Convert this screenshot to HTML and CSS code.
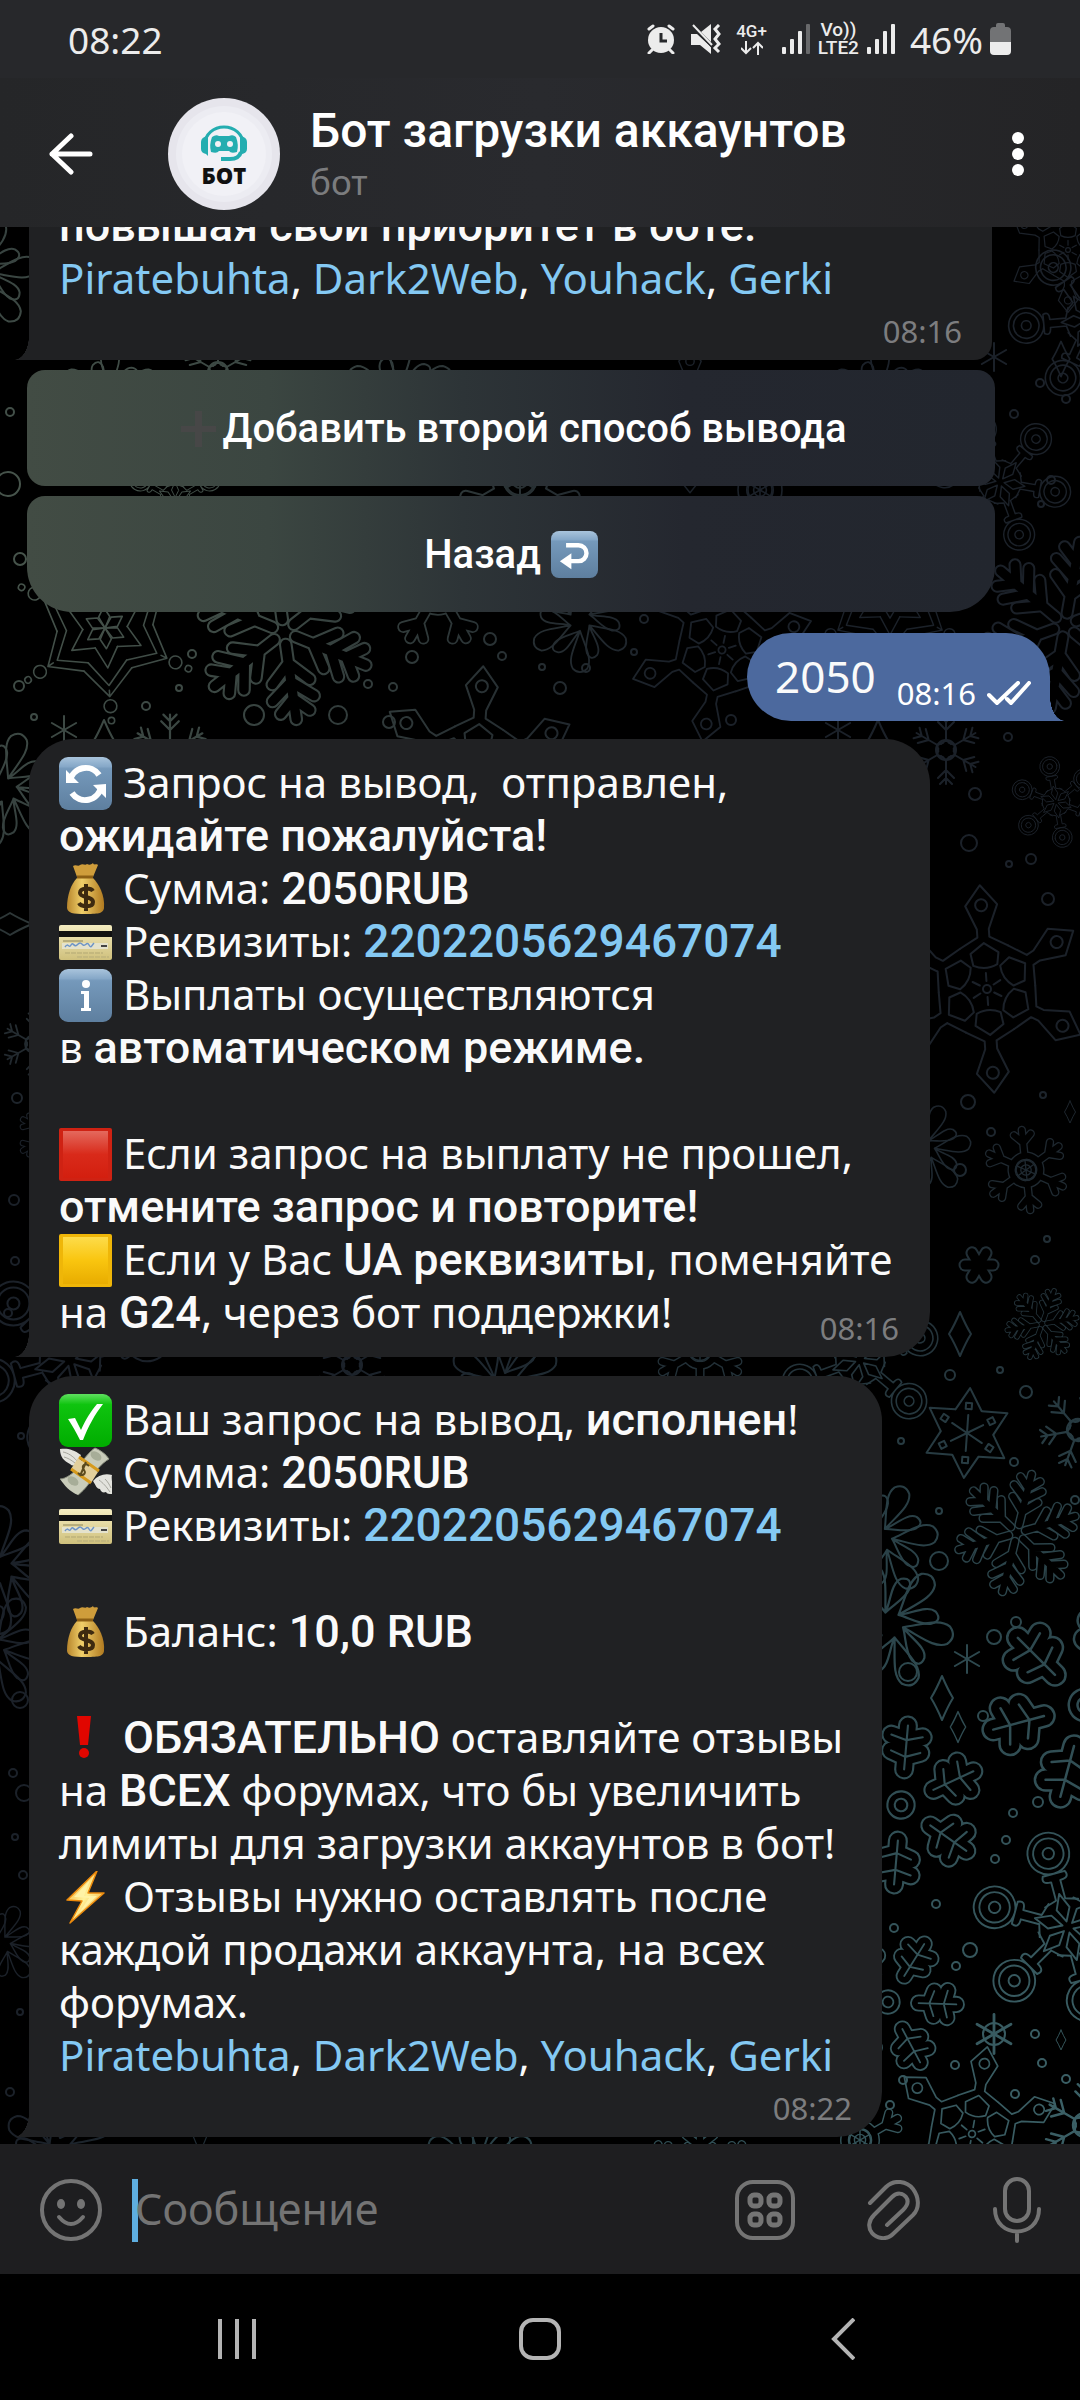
FILE: index.html
```html
<!DOCTYPE html>
<html lang="ru">
<head>
  <meta charset="UTF-8">
  <meta name="viewport" content="width=device-width, initial-scale=1.0">
  <title>Бот загрузки аккаунтов</title>
  <link rel="stylesheet" href="styles.css">
</head>
<body>
  <!-- emoji -->
  <svg class="defs" aria-hidden="true">
    <defs>
      <linearGradient id="blue" x1="0" y1="0" x2="0" y2="1">
        <stop offset="0" stop-color="#a9c4dc"/><stop offset=".18" stop-color="#86a8c8"/>
        <stop offset=".22" stop-color="#7599bb"/><stop offset="1" stop-color="#5e7f9f"/>
      </linearGradient>
      <linearGradient id="red" x1="0" y1="0" x2="0" y2="1">
        <stop offset="0" stop-color="#e4695d"/><stop offset=".5" stop-color="#d92a1a"/><stop offset="1" stop-color="#d31f0f"/>
      </linearGradient>
      <linearGradient id="yellow" x1="0" y1="0" x2="0" y2="1">
        <stop offset="0" stop-color="#fddc4a"/><stop offset=".5" stop-color="#f9c50f"/><stop offset="1" stop-color="#e8ac00"/>
      </linearGradient>
      <linearGradient id="green" x1="0" y1="0" x2="0" y2="1">
        <stop offset="0" stop-color="#5fe05f"/><stop offset=".2" stop-color="#0fc40f"/><stop offset="1" stop-color="#00ad00"/>
      </linearGradient>
      <linearGradient id="gold" x1="0" y1="0" x2="1" y2="0">
        <stop offset="0" stop-color="#b8862c"/><stop offset=".4" stop-color="#f0cf6a"/><stop offset="1" stop-color="#b07a20"/>
      </linearGradient>
      <linearGradient id="cream" x1="0" y1="0" x2="0" y2="1">
        <stop offset="0" stop-color="#f4ecc0"/><stop offset="1" stop-color="#cfc07c"/>
      </linearGradient>
      <linearGradient id="bolt" x1="0" y1="0" x2="1" y2="1">
        <stop offset="0" stop-color="#f59a12"/><stop offset=".5" stop-color="#fff29a"/><stop offset="1" stop-color="#f08c0a"/>
      </linearGradient>
    </defs>
    <symbol id="e-refresh" viewBox="0 0 53 53">
      <rect width="53" height="53" rx="9" fill="url(#blue)"/>
      <path d="M11 24A16 16 0 0 1 40 18M42 30A16 16 0 0 1 13 36" fill="none" stroke="#fff" stroke-width="6"/>
      <path d="M7 26V13l13 13zM47 27v14L34 28z" fill="#fff"/>
    </symbol>
    <symbol id="e-bag" viewBox="0 0 53 53">
      <path d="M18 14L14 3c3-2 5 1 7-1 3-2 5 1 7-1 2 1 4 1 6-1 1 3 4 0 5 2l-5 12z" fill="#cf9d3b"/>
      <path d="M18 15h16c6 6 12 17 11 30-1 5-4 6-18 6S9 50 8 45C8 32 12 21 18 15z" fill="url(#gold)"/>
      <path d="M18 14h16" stroke="#8c5f14" stroke-width="3"/>
      <path d="M34 28c-2-3-13-4-13 2 0 5 13 3 13 9 0 6-12 5-14 1M27 21v27" fill="none" stroke="#3d2a10" stroke-width="4"/>
    </symbol>
    <symbol id="e-card" viewBox="0 0 53 53">
      <rect y="9" width="53" height="35" rx="2" fill="url(#cream)"/>
      <rect y="15" width="53" height="6" fill="#111"/>
      <path d="M4 25h20" stroke="#8b8458" stroke-width="1"/>
      <rect x="3" y="27" width="46" height="6" fill="#e4e2cc"/>
      <path d="M6 31c3-5 4 2 6-2s3 3 6 0 4-2 6 0 4-4 6 0 3 0 5-2" fill="none" stroke="#6d94c6" stroke-width="1.5"/>
      <path d="M42 30h6" stroke="#444" stroke-width="2"/>
      <path d="M6 37h38M18 41h32" stroke="#c4b87e" stroke-width="2" stroke-dasharray="5 1"/>
    </symbol>
    <symbol id="e-info" viewBox="0 0 53 53">
      <rect width="53" height="53" rx="9" fill="url(#blue)"/>
      <circle cx="27" cy="15" r="4" fill="#fff"/>
      <path d="M22 22h8v17h2v3H22v-3h3V25h-3z" fill="#fff"/>
    </symbol>
    <symbol id="e-red" viewBox="0 0 53 53">
      <rect width="53" height="53" rx="2" fill="#cf2213"/>
      <rect x="4" y="3" width="45" height="47" fill="url(#red)"/>
    </symbol>
    <symbol id="e-yellow" viewBox="0 0 53 53">
      <rect width="53" height="53" rx="2" fill="#efb608"/>
      <rect x="4" y="3" width="45" height="47" fill="url(#yellow)"/>
    </symbol>
    <symbol id="e-check" viewBox="0 0 53 53">
      <rect width="53" height="53" rx="9" fill="url(#green)"/>
      <path d="M9 25l7-1 6 12C27 25 32 17 38 10h6C36 20 29 33 24 46h-3C17 38 13 31 9 25z" fill="#fff"/>
    </symbol>
    <symbol id="e-money" viewBox="0 0 53 53">
      <path d="M22 8C14 2 8 1 1 2c0 8 4 12 10 15 2 2 4 2 7 0zM34 34c5-6 12-8 19-6-1 4 1 7 0 19-3 0-5 0-6-2-3 1-5 0-6-3-3 0-4-3-7-8z" fill="#e3e3dd"/>
      <path d="M4 5c5 1 10 4 14 9M5 10c4 1 7 3 11 6M40 33c4 3 7 6 11 12M46 32c3 3 4 5 6 9" fill="none" stroke="#a5a59c" stroke-width="1"/>
      <path d="M1 32c6 0 14-6 18-12S32 3 36 1c5 2 11 6 14 11-7 4-14 12-17 19S23 45 19 48C11 45 5 38 1 32z" fill="#c9ccba"/>
      <path d="M1 32c6 0 14-6 18-12S32 3 36 1c5 2 11 6 14 11-7 4-14 12-17 19S23 45 19 48" fill="none" stroke="#8c9180" stroke-width="1"/>
      <ellipse cx="37" cy="9" rx="6" ry="4" fill="#a7ad98" transform="rotate(35 37 9)"/>
      <ellipse cx="14" cy="34" rx="6" ry="4" fill="#a7ad98" transform="rotate(35 14 34)"/>
      <path d="M19 11l20 14-7 11-20-14z" fill="#e2cf9c"/>
      <path d="M20 10l20 14M12 22l20 14" stroke="#d69a1d" stroke-width="3"/>
      <path d="M30 19c-4-4-8 0-5 4s-2 7-6 3M27 15L21 29" fill="none" stroke="#5b4a1e" stroke-width="2"/>
    </symbol>
    <symbol id="e-bang" viewBox="0 0 53 53">
      <path d="M18 4h14l-3 29h-8z" fill="#e10600"/><circle cx="25" cy="41" r="5" fill="#e10600"/>
    </symbol>
    <symbol id="e-bolt" viewBox="0 0 53 53">
      <path d="M38 0L8 29l15 1-12 22 34-30H29z" fill="url(#bolt)" stroke="#ec8a0c" stroke-width="1.5" stroke-linejoin="round"/>
      <path d="M31 9L15 26l15 1-10 15 18-17H25z" fill="#fff3a6"/>
    </symbol>
    <symbol id="e-plus" viewBox="0 0 47 47">
      <path d="M20 6h7v15h14v6H27v15h-7V27H6v-6h14z" fill="#474747"/>
    </symbol>
    <symbol id="e-back" viewBox="0 0 53 53">
      <rect width="53" height="53" rx="9" fill="url(#blue)"/>
      <path d="M17 16h14a9 9 0 0 1 0 18h-9" fill="none" stroke="#fff" stroke-width="5"/>
      <path d="M10 34l13-9v18z" fill="#fff"/>
    </symbol>
  </svg>

  <div class="statusbar">
    <span class="clock">08:22</span>
    <div class="status-icons">
      <svg width="30" height="30" viewBox="0 0 30 30" fill="none" stroke="#ececec" stroke-width="3" stroke-linecap="round">
        <circle cx="15" cy="16" r="13" fill="#ececec" stroke="none"/>
        <path d="M3 5l4-3M27 5l-4-3M6 26l-3 3M24 26l3 3"/>
        <path d="M15 9v8h6" stroke="#27282b" stroke-width="3" stroke-linecap="butt"/>
      </svg>
      <svg width="30" height="30" viewBox="0 0 30 30">
        <path d="M0 10h6l14 13v7L9 21H0zM20 0v18L10 8z" fill="#ececec"/>
        <path d="M2 2l20 22" stroke="#27282b" stroke-width="2"/>
        <path d="M2 1l19 20" stroke="#ececec" stroke-width="2"/>
        <path d="M28 1l-4 4 4 5-4 5 4 5-4 4 4 4" fill="none" stroke="#ececec" stroke-width="3"/>
      </svg>
      <div class="net">
        <span>4G+</span>
        <svg width="22" height="14" viewBox="0 0 22 14" fill="none" stroke="#ececec" stroke-width="2"><path d="M5 0v12M0 7l5 5 5-5M17 14V2M12 7l5-5 5 5"/></svg>
      </div>
      <svg width="28" height="30" viewBox="0 0 28 30" fill="#ececec">
        <rect y="23" width="4" height="7" rx="1"/><rect x="8" y="15" width="4" height="15" rx="1"/>
        <rect x="16" y="7" width="4" height="23" rx="1"/><rect x="24" width="4" height="30" rx="1" fill="#68696b"/>
      </svg>
      <div class="net lte"><span>Vo))</span><span>LTE2</span></div>
      <svg width="28" height="30" viewBox="0 0 28 30" fill="#ececec">
        <rect y="23" width="4" height="7" rx="1"/><rect x="8" y="15" width="4" height="15" rx="1"/>
        <rect x="16" y="7" width="4" height="23" rx="1"/><rect x="24" width="4" height="30" rx="1"/>
      </svg>
      <span class="battery-level">46%</span>
      <svg class="battery" width="21" height="32" viewBox="0 0 21 32">
        <path d="M6 4V2q0-2 2-2h5q2 0 2 2v2h2q4 0 4 4v12H0V8q0-4 4-4z" fill="#727375"/>
        <path d="M0 19h21v9q0 4-4 4H4q-4 0-4-4z" fill="#ececec"/>
      </svg>
    </div>
  </div>

  <header class="header">
    <button class="icon-btn back" aria-label="Назад">
      <svg width="44" height="42" viewBox="0 0 44 42" fill="none" stroke="#fff" stroke-width="5" stroke-linecap="round" stroke-linejoin="round"><path d="M22 3L3 21l19 18M3 21h38"/></svg>
    </button>
    <svg class="avatar" width="112" height="112" viewBox="0 0 112 112">
      <circle cx="56" cy="56" r="56" fill="#e6e5ec"/>
      <circle cx="56" cy="56" r="48" fill="#ececf2"/>
      <circle cx="56" cy="56" r="42" fill="#f1f1f6"/>
      <path d="M37 46a19 17 0 0 1 38 0" fill="none" stroke="#24adb0" stroke-width="3"/>
      <path d="M40 38v20l-2-2q-5-1-5-5v-7q0-5 7-6zM72 38v18q7 0 7-5v-7q0-5-7-6z" fill="#24adb0"/>
      <path d="M44 39q4-3 7-1h10q4-2 7 1 3 8 1 15-6 2-8-1H51q-2 3-8 1-2-7 1-15z" fill="#24adb0"/>
      <circle cx="50" cy="46" r="3" fill="#f1f1f6"/><circle cx="62" cy="46" r="3" fill="#f1f1f6"/>
      <path d="M73 54q-2 7-11 7h-9" fill="none" stroke="#24adb0" stroke-width="4"/>
      <text x="56" y="86" text-anchor="middle" class="avatar-text">БОТ</text>
    </svg>
    <div class="peer">
      <h1>Бот загрузки аккаунтов</h1>
      <p>бот</p>
    </div>
    <button class="icon-btn" aria-label="Меню">
      <svg width="12" height="44" viewBox="0 0 12 44" fill="#fff"><circle cx="6" cy="6" r="6"/><circle cx="6" cy="22" r="6"/><circle cx="6" cy="38" r="6"/></svg>
    </button>
  </header>

  <main class="chat">
    <!-- wallpaper: every flake is one arm rotated six times -->
    <svg class="wallpaper" viewBox="0 227 1080 1917" preserveAspectRatio="xMidYMin slice" aria-hidden="true">
      <defs>
        <radialGradient id="w-top" gradientUnits="userSpaceOnUse" cx="60" cy="520" r="620">
          <stop offset="0" stop-color="#4a584e"/><stop offset=".4" stop-color="#3a4642"/><stop offset="1" stop-color="#3a4642" stop-opacity="0"/>
        </radialGradient>
        <radialGradient id="w-bottom" gradientUnits="userSpaceOnUse" cx="1080" cy="2100" r="1050">
          <stop offset="0" stop-color="#3b6066"/><stop offset=".45" stop-color="#2d484e"/><stop offset="1" stop-color="#2d484e" stop-opacity="0"/>
        </radialGradient>

        <path id="a-fern" d="M0 -12V-84M0 -30l18 -18M0 -30l-18 -18M0 -48l20 -16M0 -48l-20 -16M0 -64l14 -13M0 -64l-14 -13"/>
        <path id="a-lobe" d="M0 -22V-62M0 -42l13 -13M0 -42l-13 -13"/>
        <path id="a-oak" d="M0 -34V-76M0 -62l15 -4M0 -62l-15 -4M0 -46l14 -5M0 -46l-14 -5"/>
        <path id="a-drop" d="M0 -12C-6 -30 -14 -44 -8 -54Q0 -62 8 -54C14 -44 6 -30 0 -12zM0 -12C8 -20 14 -36 24 -36Q34 -34 28 -25C22 -18 8 -16 0 -12z"/>
        <path id="a-gem" d="M-6 -52V-60L-16 -84L0 -104L16 -84L6 -60V-52L24 -42M-6 -52L-24 -42M-12 -24L-14 -36L0 -46L14 -36L12 -24Q0 -18 -12 -24zM0 -8v-8M6 -84a6 6 0 1 0 -12 0a6 6 0 1 0 12 0"/>
        <path id="a-ring" d="M-5 -30V-50Q-16 -50 -12 -58L12 -58Q16 -50 5 -50V-30L18 -26M-5 -30L-18 -26M0 -6L-7 -20L0 -36L7 -20zM22 -80a22 22 0 1 0 -44 0a22 22 0 1 0 44 0M16 -80a16 16 0 1 0 -32 0a16 16 0 1 0 32 0M6 -80a6 6 0 1 0 -12 0a6 6 0 1 0 12 0"/>
        <path id="a-thin" d="M0 -10V-34M0 -20l8 -8M0 -20l-8 -8M0 -28l6 -6M0 -28l-6 -6M5 -6l-5 -4l-5 4"/>
        <path id="a-star" d="M-30 -52L0 -86L30 -52M-24 -42L0 -72L24 -42M-14 -24L0 -50L14 -24M0 0L-7 -14L0 -26L7 -14zM0 -86v8M8 -98a8 8 0 1 0 -16 0a8 8 0 1 0 16 0M4 -116a4 4 0 1 0 -8 0a4 4 0 1 0 8 0"/>
        <path id="a-six" d="M-13 -23L0 -45L13 -23M0 0V-18M-3 -30h6v6h-6z"/>
        <path id="a-spark" d="M0 0V-14"/>

        <g id="fern"><use href="#a-fern"/><use href="#a-fern" transform="rotate(60)"/><use href="#a-fern" transform="rotate(120)"/><use href="#a-fern" transform="rotate(180)"/><use href="#a-fern" transform="rotate(240)"/><use href="#a-fern" transform="rotate(300)"/></g>
        <g id="lobe"><use href="#a-lobe"/><use href="#a-lobe" transform="rotate(60)"/><use href="#a-lobe" transform="rotate(120)"/><use href="#a-lobe" transform="rotate(180)"/><use href="#a-lobe" transform="rotate(240)"/><use href="#a-lobe" transform="rotate(300)"/><circle r="22"/></g>
        <g id="oak"><use href="#a-oak"/><use href="#a-oak" transform="rotate(60)"/><use href="#a-oak" transform="rotate(120)"/><use href="#a-oak" transform="rotate(180)"/><use href="#a-oak" transform="rotate(240)"/><use href="#a-oak" transform="rotate(300)"/></g>
        <g id="drop"><use href="#a-drop"/><use href="#a-drop" transform="rotate(60)"/><use href="#a-drop" transform="rotate(120)"/><use href="#a-drop" transform="rotate(180)"/><use href="#a-drop" transform="rotate(240)"/><use href="#a-drop" transform="rotate(300)"/></g>
        <g id="gem"><use href="#a-gem"/><use href="#a-gem" transform="rotate(60)"/><use href="#a-gem" transform="rotate(120)"/><use href="#a-gem" transform="rotate(180)"/><use href="#a-gem" transform="rotate(240)"/><use href="#a-gem" transform="rotate(300)"/><circle r="4"/></g>
        <g id="ring"><use href="#a-ring"/><use href="#a-ring" transform="rotate(60)"/><use href="#a-ring" transform="rotate(120)"/><use href="#a-ring" transform="rotate(180)"/><use href="#a-ring" transform="rotate(240)"/><use href="#a-ring" transform="rotate(300)"/></g>
        <g id="thin"><use href="#a-thin"/><use href="#a-thin" transform="rotate(60)"/><use href="#a-thin" transform="rotate(120)"/><use href="#a-thin" transform="rotate(180)"/><use href="#a-thin" transform="rotate(240)"/><use href="#a-thin" transform="rotate(300)"/><circle r="10"/></g>
        <g id="star"><use href="#a-star"/><use href="#a-star" transform="rotate(60)"/><use href="#a-star" transform="rotate(120)"/><use href="#a-star" transform="rotate(180)"/><use href="#a-star" transform="rotate(240)"/><use href="#a-star" transform="rotate(300)"/></g>
        <g id="six"><use href="#a-six"/><use href="#a-six" transform="rotate(60)"/><use href="#a-six" transform="rotate(120)"/><use href="#a-six" transform="rotate(180)"/><use href="#a-six" transform="rotate(240)"/><use href="#a-six" transform="rotate(300)"/></g>
        <g id="spark"><use href="#a-spark"/><use href="#a-spark" transform="rotate(60)"/><use href="#a-spark" transform="rotate(120)"/><use href="#a-spark" transform="rotate(180)"/><use href="#a-spark" transform="rotate(240)"/><use href="#a-spark" transform="rotate(300)"/></g>
        <g id="fern-line"><use href="#fern" class="outer"/><use href="#fern" class="inner"/></g>
        <g id="lobe-line"><use href="#lobe" class="outer"/><use href="#lobe" class="inner"/><circle r="15"/><circle r="8"/><use href="#spark"/></g>
        <g id="oak-line"><use href="#oak" class="outer wide"/><use href="#oak" class="inner wide"/><use href="#oak" class="vein"/><circle r="13"/><circle r="6"/></g>
        <path id="diamond" d="M0 -22Q6 -8 11 0Q6 8 0 22Q-6 8 -11 0Q-6 -8 0 -22z"/>

        <mask id="flakes" maskUnits="userSpaceOnUse" x="0" y="227" width="1080" height="1917">
          <g fill="none" stroke="#fff" stroke-width="2" stroke-linecap="round" stroke-linejoin="round">
            <!-- top -->
            <use href="#drop" transform="translate(-20 275) rotate(20)"/>
            <use href="#gem" transform="translate(1068 250) scale(.6)"/>
            <use href="#ring" transform="translate(1090 320) rotate(25) scale(.8)"/>
            <use href="#spark" transform="translate(994 357)"/>
            <use href="#diamond" transform="translate(1061 359) scale(.8)"/>
            <use href="#thin" transform="translate(218 372)"/>
            <use href="#drop" transform="translate(110 400) scale(.9)"/>
            <use href="#drop" transform="translate(400 400)"/>
            <use href="#gem" transform="translate(690 420) scale(.7)"/>
            <use href="#drop" transform="translate(880 400) scale(.9)"/>
            <use href="#ring" transform="translate(1000 482) rotate(40) scale(.7)"/>
            <use href="#ring" transform="translate(175 500) scale(.5)"/>
            <use href="#lobe-line" transform="translate(520 480)"/>
            <use href="#lobe-line" transform="translate(760 490) scale(.8)"/>
            <use href="#star" transform="translate(105 628) rotate(-4) scale(.8)"/>
            <use href="#fern-line" transform="translate(284 632) rotate(-8) scale(1.05)"/>
            <use href="#lobe-line" transform="translate(438 590) rotate(30) scale(.9)"/>
            <use href="#drop" transform="translate(580 620) scale(.9)"/>
            <use href="#gem" transform="translate(722 650) rotate(12) scale(.9)"/>
            <use href="#star" transform="translate(890 600) scale(.7)"/>
            <use href="#fern-line" transform="translate(1065 625) rotate(10)"/>
            <use href="#gem" transform="translate(476 770) rotate(4)"/>
            <!-- left edge -->
            <use href="#spark" transform="translate(64 730)"/>
            <use href="#diamond" transform="translate(104 742)"/>
            <use href="#thin" transform="translate(170 752) scale(1.1)"/>
            <use href="#drop" transform="translate(5 790) rotate(15)"/>
            <use href="#diamond" transform="translate(10 924) rotate(90)"/>
            <use href="#thin" transform="translate(34 1044) scale(.9)"/>
            <use href="#lobe-line" transform="translate(50 1135) scale(.5)"/>
            <!-- right column -->
            <use href="#spark" transform="translate(838 730)"/>
            <use href="#diamond" transform="translate(878 742)"/>
            <use href="#thin" transform="translate(946 750)"/>
            <use href="#ring" transform="translate(1056 802) rotate(50) scale(.45)"/>
            <use href="#gem" transform="translate(987 989) rotate(-4)"/>
            <use href="#drop" transform="translate(925 1150) rotate(20) scale(.8)"/>
            <use href="#lobe-line" transform="translate(1026 1170) rotate(-6) scale(.65)"/>
            <use href="#spark" transform="translate(979 1265) rotate(30)" class="outer"/>
            <use href="#spark" transform="translate(979 1265) rotate(30)" class="inner"/>
            <use href="#diamond" transform="translate(960 1334)"/>
            <use href="#fern-line" transform="translate(1042 1324) rotate(20) scale(.42)"/>
            <use href="#diamond" transform="translate(1070 1112) scale(.5)"/>
            <use href="#ring" transform="translate(70 1360) rotate(15)"/>
            <use href="#thin" transform="translate(352 1365)"/>
            <use href="#drop" transform="translate(505 1385)"/>
            <use href="#lobe-line" transform="translate(700 1350) scale(.7)"/>
            <use href="#ring" transform="translate(860 1360) rotate(10) scale(.8)"/>
            <use href="#six" transform="translate(967 1433) rotate(4)"/>
            <use href="#thin" transform="translate(1078 1430) rotate(20) scale(1.1)"/>
            <use href="#fern-line" transform="translate(1017 1533) rotate(14) scale(.72)"/>
            <use href="#drop" transform="translate(880 1540) rotate(24)"/>
            <use href="#drop" transform="translate(890 1625) rotate(40) scale(1.1)"/>
            <use href="#drop" transform="translate(0 1570) scale(1.1)"/>
            <use href="#drop" transform="translate(-8 1650) rotate(30)"/>
            <use href="#spark" transform="translate(967 1659)"/>
            <use href="#diamond" transform="translate(942 1698)"/>
            <use href="#diamond" transform="translate(958 1727) scale(.7)"/>
            <use href="#oak-line" transform="translate(1085 1705) rotate(15) scale(1.25)"/>
            <use href="#oak-line" transform="translate(901 1805) rotate(5) scale(1.05)"/>
            <use href="#ring" transform="translate(1068 1927) rotate(-15) scale(.95)"/>
            <use href="#oak-line" transform="translate(888 2002) rotate(32) scale(.9)"/>
            <circle cx="994" cy="2034" r="11"/><use href="#spark" transform="translate(994 2034) scale(1.4)"/>
            <use href="#diamond" transform="translate(1061 2040) scale(.45)"/>
            <use href="#drop" transform="translate(2 1945) rotate(20) scale(.7)"/>
            <use href="#gem" transform="translate(972 2134) rotate(10) scale(.85)"/>
            <use href="#lobe-line" transform="translate(860 2140) scale(.7)"/>
            <use href="#thin" transform="translate(1085 2125) scale(1.2)"/>
            <use href="#drop" transform="translate(60 2150)"/>
            <use href="#gem" transform="translate(200 2180) scale(.6)"/>
            <use href="#drop" transform="translate(480 2170)"/>
            <use href="#fern-line" transform="translate(700 2180) scale(.7)"/>
            <!-- snow -->
            <circle cx="10" cy="412" r="4"/><circle cx="8" cy="484" r="12"/><circle cx="20" cy="559" r="6"/><circle cx="19" cy="686" r="5"/>
            <circle cx="192" cy="654" r="4"/><circle cx="146" cy="706" r="4"/><circle cx="34" cy="717" r="3"/><circle cx="179" cy="688" r="3"/>
            <circle cx="254" cy="715" r="10"/><circle cx="338" cy="715" r="9"/><circle cx="368" cy="684" r="4"/><circle cx="393" cy="687" r="4"/>
            <circle cx="389" cy="722" r="6"/><circle cx="412" cy="657" r="6"/><circle cx="490" cy="639" r="6"/><circle cx="502" cy="656" r="4"/>
            <circle cx="542" cy="667" r="3"/><circle cx="586" cy="668" r="4"/><circle cx="560" cy="688" r="6"/><circle cx="634" cy="652" r="3"/>
            <circle cx="644" cy="619" r="4"/><circle cx="731" cy="720" r="5"/><circle cx="1040" cy="383" r="4"/><circle cx="1066" cy="399" r="4"/>
            <circle cx="1014" cy="414" r="4"/><circle cx="1051" cy="480" r="4"/><circle cx="1041" cy="504" r="3"/><circle cx="1008" cy="737" r="4"/>
            <circle cx="975" cy="794" r="6"/><circle cx="969" cy="843" r="8"/><circle cx="1009" cy="864" r="3"/><circle cx="1031" cy="859" r="5"/>
            <circle cx="1048" cy="899" r="6"/><circle cx="968" cy="1102" r="7"/><circle cx="991" cy="1132" r="4"/><circle cx="960" cy="1170" r="6"/>
            <circle cx="1043" cy="1095" r="3"/><circle cx="1047" cy="1239" r="3"/><circle cx="1035" cy="1260" r="4"/><circle cx="17" cy="1098" r="5"/>
            <circle cx="14" cy="1200" r="5"/><circle cx="15" cy="1261" r="4"/><circle cx="8" cy="1313" r="4"/><circle cx="21" cy="1436" r="3"/>
            <circle cx="950" cy="1375" r="5"/><circle cx="1000" cy="1370" r="3"/><circle cx="1026" cy="1392" r="6"/><circle cx="901" cy="1441" r="3"/>
            <circle cx="1014" cy="1462" r="4"/><circle cx="1075" cy="1500" r="4"/><circle cx="939" cy="1511" r="3"/><circle cx="939" cy="1561" r="9"/>
            <circle cx="1016" cy="1622" r="5"/><circle cx="994" cy="1637" r="7"/><circle cx="908" cy="1672" r="9"/><circle cx="983" cy="1716" r="5"/>
            <circle cx="20" cy="1700" r="8"/><circle cx="13" cy="1773" r="4"/><circle cx="24" cy="1793" r="8"/><circle cx="15" cy="1837" r="3"/>
            <circle cx="23" cy="1875" r="4"/><circle cx="20" cy="2012" r="3"/><circle cx="10" cy="2092" r="4"/><circle cx="1038" cy="1802" r="5"/>
            <circle cx="1013" cy="1813" r="4"/><circle cx="1006" cy="1840" r="4"/><circle cx="995" cy="1859" r="4"/><circle cx="936" cy="1904" r="4"/>
            <circle cx="894" cy="1928" r="4"/><circle cx="970" cy="1950" r="7"/><circle cx="956" cy="1966" r="4"/><circle cx="1035" cy="2034" r="4"/>
            <circle cx="1042" cy="2063" r="4"/><circle cx="955" cy="2065" r="4"/><circle cx="903" cy="2080" r="4"/><circle cx="1066" cy="2079" r="4"/>
            <circle cx="1015" cy="2094" r="4"/><circle cx="890" cy="2105" r="4"/>
          </g>
        </mask>
      </defs>
      <g mask="url(#flakes)">
        <rect y="227" width="1080" height="1917" fill="#1b2129"/>
        <rect y="227" width="1080" height="1917" fill="url(#w-top)"/>
        <rect y="227" width="1080" height="1917" fill="url(#w-bottom)"/>
      </g>
    </svg>

    <section class="bubble first">
      <p><b>повышая свой приоритет в боте.</b></p>
      <p><a href="#">Piratebuhta</a>, <a href="#">Dark2Web</a>, <a href="#">Youhack</a>, <a href="#">Gerki</a></p>
      <time>08:16</time>
    </section>

    <div class="keyboard">
      <button class="key"><svg class="key-emoji"><use href="#e-plus"/></svg>Добавить второй способ вывода</button>
      <button class="key">Назад&nbsp;<svg class="key-emoji"><use href="#e-back"/></svg></button>
    </div>

    <section class="bubble out">
      <p>2050</p>
      <time>08:16</time>
      <svg class="checks" width="44" height="24" viewBox="0 0 44 24" fill="none" stroke="#fff" stroke-width="4" stroke-linecap="round"><path d="M2 14l8 8L31 2M20 18l4 4L42 2"/></svg>
    </section>

    <section class="bubble request">
      <p><svg class="emoji"><use href="#e-refresh"/></svg> Запрос на вывод,&nbsp; отправлен,</p>
      <p><b>ожидайте пожалуйста!</b></p>
      <p><svg class="emoji"><use href="#e-bag"/></svg> Сумма: <b>2050RUB</b></p>
      <p><svg class="emoji"><use href="#e-card"/></svg> Реквизиты: <a href="#"><b>2202205629467074</b></a></p>
      <p><svg class="emoji"><use href="#e-info"/></svg> Выплаты осуществляются</p>
      <p>в <b>автоматическом режиме.</b></p>
      <p></p>
      <p><svg class="emoji"><use href="#e-red"/></svg> Если запрос на выплату не прошел,</p>
      <p><b>отмените запрос и повторите!</b></p>
      <p><svg class="emoji"><use href="#e-yellow"/></svg> Если у Вас <b>UA реквизиты</b>, поменяйте</p>
      <p>на <b>G24</b>, через бот поддержки!</p>
      <time>08:16</time>
    </section>

    <section class="bubble done">
      <p><svg class="emoji"><use href="#e-check"/></svg> Ваш запрос на вывод, <b>исполнен</b>!</p>
      <p><svg class="emoji"><use href="#e-money"/></svg> Сумма: <b>2050RUB</b></p>
      <p><svg class="emoji"><use href="#e-card"/></svg> Реквизиты: <a href="#"><b>2202205629467074</b></a></p>
      <p></p>
      <p><svg class="emoji"><use href="#e-bag"/></svg> Баланс: <b>10,0 RUB</b></p>
      <p></p>
      <p><svg class="emoji"><use href="#e-bang"/></svg> <b>ОБЯЗАТЕЛЬНО</b> оставляйте отзывы</p>
      <p>на <b>ВСЕХ</b> форумах, что бы увеличить</p>
      <p>лимиты для загрузки аккаунтов в бот!</p>
      <p><svg class="emoji"><use href="#e-bolt"/></svg> Отзывы нужно оставлять после</p>
      <p>каждой продажи аккаунта, на всех</p>
      <p>форумах.</p>
      <p><a href="#">Piratebuhta</a>, <a href="#">Dark2Web</a>, <a href="#">Youhack</a>, <a href="#">Gerki</a></p>
      <time>08:22</time>
    </section>
  </main>

  <form class="composer">
    <button type="button" class="icon-btn" aria-label="Эмодзи">
      <svg width="62" height="62" viewBox="0 0 62 62" fill="none" stroke="#747474" stroke-width="4" stroke-linecap="round">
        <circle cx="31" cy="31" r="29"/><path d="M19 38q12 14 24 0"/>
        <ellipse cx="21" cy="25" rx="4" ry="5" fill="#747474" stroke="none"/><ellipse cx="41" cy="25" rx="4" ry="5" fill="#747474" stroke="none"/>
      </svg>
    </button>
    <input type="text" class="message-input" placeholder="Сообщение" aria-label="Сообщение">
    <div class="tools">
      <button type="button" class="icon-btn" aria-label="Команды">
        <svg width="60" height="60" viewBox="0 0 60 60" fill="none" stroke="#747474" stroke-width="5">
          <rect x="2" y="2" width="56" height="56" rx="16" stroke-width="4"/>
          <rect x="15" y="15" width="11" height="11" rx="4"/><rect x="34" y="15" width="11" height="11" rx="4"/>
          <rect x="15" y="34" width="11" height="11" rx="4"/><rect x="34" y="34" width="11" height="11" rx="4"/>
        </svg>
      </button>
      <button type="button" class="icon-btn" aria-label="Прикрепить">
        <svg width="54" height="60" viewBox="0 0 54 60" fill="none" stroke="#747474" stroke-width="4" stroke-linecap="round">
          <path d="M3 23L19 7C27 -1 40 1 46 9S53 28 46 35L26 54C19 61 9 58 5 53S1 41 7 35L25 17C30 12 36 13 39 17S40 26 36 30L20 45"/>
        </svg>
      </button>
      <button type="button" class="icon-btn" aria-label="Голосовое сообщение">
        <svg width="48" height="66" viewBox="0 0 48 66" fill="none" stroke="#747474" stroke-width="4" stroke-linecap="round">
          <rect x="12" y="2" width="24" height="42" rx="12"/><path d="M2 32C2 62 46 62 46 32M24 55v9"/>
        </svg>
      </button>
    </div>
  </form>

  <nav class="navbar">
    <button class="icon-btn" aria-label="Недавние"><svg width="38" height="40" viewBox="0 0 38 40" stroke="#b4b4b4" stroke-width="4"><path d="M2 0v40M19 0v40M36 0v40"/></svg></button>
    <button class="icon-btn" aria-label="Домой"><svg width="42" height="42" viewBox="0 0 42 42" fill="none" stroke="#b4b4b4" stroke-width="4"><rect x="2" y="2" width="38" height="38" rx="12"/></svg></button>
    <button class="icon-btn" aria-label="Назад"><svg width="24" height="42" viewBox="0 0 24 42" fill="none" stroke="#b4b4b4" stroke-width="4"><path d="M23 1L3 21l20 20"/></svg></button>
  </nav>
</body>
</html>
```
FILE: styles.css
```css
* {
  box-sizing: border-box;
}
body {
  font-family: "Noto Sans", "Open Sans", sans-serif;
  font-size: 42px;
  margin: 0;
  height: 100vh;
  display: flex;
  flex-direction: column;
  background: #000;
  color: #fafafa;
}
.defs {
  position: absolute;
  width: 0;
  height: 0;
}
h1, p {
  margin: 0;
}
b, h1, .key {
  font-family: Roboto, sans-serif;
  font-weight: 500;
}
.icon-btn {
  display: flex;
  justify-content: center;
  padding: 0;
  border: none;
  background: none;
  cursor: pointer;
}

/* status bar + header */
.statusbar {
  display: flex;
  justify-content: space-between;
  align-items: center;
  height: 78px;
  padding: 0 69px 0 68px;
  background: #27282b;
  color: #ececec;
  font-size: 37px;
}
.status-icons {
  display: flex;
  align-items: center;
  gap: 15px;
}
.net {
  display: flex;
  flex-direction: column;
  align-items: center;
  gap: 2px;
  font-family: Roboto, sans-serif;
  font-size: 17px;
  font-weight: 500;
  line-height: 16px;
}
.lte {
  font-size: 19px;
  margin: 0 -7px;
}
.battery {
  margin-left: -8px;
}
.header {
  display: flex;
  align-items: center;
  height: 149px;
  padding: 2px 56px 0 49px;
  background: linear-gradient(90deg, #252628, #292a2e 50%, #242426);
}
.back {
  margin-right: 75px;
}
.avatar {
  flex: none;
}
.avatar-text {
  font-family: "Open Sans", sans-serif;
  font-size: 22px;
  font-weight: 800;
  fill: #111;
}
.peer {
  flex: 1;
  margin-left: 30px;
}
.peer h1 {
  font-size: 48px;
  line-height: 56px;
  color: #fff;
}
.peer p {
  font-size: 35px;
  line-height: 46px;
  color: #7b7c7e;
}

/* chat */
.chat {
  position: relative;
  flex: 1;
  min-height: 0;
  display: flex;
  flex-direction: column;
  justify-content: flex-end;
  padding-bottom: 7px;
  overflow: hidden;
}
.wallpaper {
  position: absolute;
  inset: 0;
  width: 100%;
  height: 100%;
}
.outer {
  stroke: #fff;
  stroke-width: 13;
}
.inner {
  stroke: #000;
  stroke-width: 9;
}
.outer.wide {
  stroke-width: 19;
}
.inner.wide {
  stroke-width: 15;
}
.vein {
  stroke: #fff;
  stroke-width: 2;
}
.bubble {
  position: relative;
  flex: none;
  margin-left: 29px;
  padding: 18px 30px 17px;
  border-radius: 45px 45px 45px 0;
  background: #202123;
  white-space: nowrap;
}
.bubble p {
  height: 53px;
  line-height: 50px;
}
.bubble b {
  font-size: 45px;
  line-height: 1;
}
.bubble a {
  color: #84c9f3;
  text-decoration: none;
}
.bubble a b {
  font-size: 46px;
}
.bubble::before {
  content: "";
  position: absolute;
  left: -15px;
  bottom: 0;
  width: 15px;
  height: 24px;
  background: radial-gradient(ellipse 15px 24px at 0 0, transparent 98%, #202123);
}
.bubble time {
  display: block;
  font-size: 31px;
  line-height: 37px;
  text-align: right;
  color: #7c7d7f;
}
.emoji {
  width: 53px;
  height: 53px;
  vertical-align: top;
}
.first, .done {
  padding-bottom: 10px;
}
.first time, .done time {
  margin-top: 7px;
}
.first {
  margin-right: 88px;
  border-radius: 45px 45px 18px 0;
}
.keyboard {
  position: relative;
  display: flex;
  flex-direction: column;
  gap: 10px;
  margin: 10px 85px 21px 27px;
}
.key {
  display: flex;
  align-items: center;
  justify-content: center;
  height: 116px;
  border: none;
  border-radius: 18px;
  background: linear-gradient(90deg, #424c44, #3b4641 25%, #2d3437 45%, #24272f 68%, #22262e);
  color: #fff;
  font-size: 40px;
}
.key:last-child {
  border-radius: 18px 18px 45px 45px;
}
.key-emoji {
  width: 47px;
  height: 47px;
}
.out {
  align-self: flex-end;
  display: flex;
  align-items: flex-end;
  margin: 0 30px 18px 0;
  height: 88px;
  padding: 0 19px 10px 28px;
  border-radius: 44px 44px 0 44px;
  background: #4c699e;
}
.out::before {
  left: auto;
  right: -15px;
  background: radial-gradient(ellipse 15px 24px at 100% 0, transparent 98%, #4c699e);
}
.out p {
  height: 60px;
  font-size: 44px;
}
.out time {
  margin-left: 21px;
  line-height: 36px;
  color: #fff;
}
.checks {
  margin: 0 0 6px 11px;
}
.request {
  margin-right: 150px;
  margin-bottom: 19px;
}
.request time {
  position: absolute;
  right: 31px;
  bottom: 10px;
}
.done {
  margin-right: 198px;
}

/* message field */
.composer {
  display: flex;
  align-items: center;
  height: 130px;
  padding: 2px 39px 0 40px;
  background: #1e1e20;
}
.message-input {
  flex: 1;
  min-width: 0;
  height: 63px;
  margin: 0 30px;
  padding: 0 0 4px 3px;
  border: none;
  outline: none;
  background: linear-gradient(#5eaee0, #5eaee0) left / 6px 100% no-repeat;
  color: #fff;
  font: inherit;
  font-size: 43px;
}
.message-input::placeholder {
  color: #747474;
  opacity: 1;
}
.tools {
  display: flex;
  align-items: center;
  gap: 72px;
}

/* system navigation */
.navbar {
  display: flex;
  align-items: center;
  justify-content: space-between;
  height: 126px;
  padding: 4px 216px 0;
  background: #000;
}
.navbar .icon-btn {
  width: 42px;
}
```
